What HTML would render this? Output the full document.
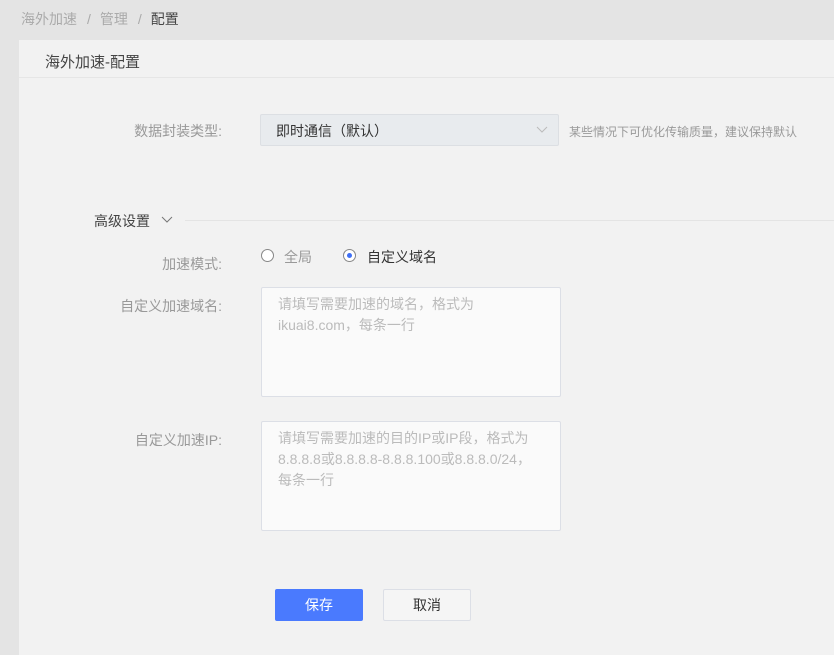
<!DOCTYPE html>
<html><head><meta charset="utf-8"><style>
*{margin:0;padding:0;box-sizing:border-box}
body{width:834px;height:655px;background:#e4e4e4;font-family:"Liberation Sans","Noto Sans CJK SC",sans-serif;font-size:14px;color:#333;position:relative;overflow:hidden}
.a{position:absolute;white-space:nowrap}
.card{position:absolute;left:19px;top:40px;right:0;bottom:0;background:#f2f2f2}
.lbl{color:#999;text-align:right;width:200px}
.ta{position:absolute;background:#fafafa;border:1px solid #dcdfe6;border-radius:2px;color:#bbb;padding:6px 16px;line-height:21px;white-space:normal}
</style></head><body>
<div class="a" style="left:21px;top:9px;color:#aaa">海外加速<span style="margin:0 9px 0 10px">/</span>管理<span style="margin:0 9px 0 10px">/</span><span style="color:#444">配置</span></div>
<div class="card"></div>
<div class="a" style="left:45px;top:51px;font-size:15px;color:#444">海外加速-配置</div>
<div class="a" style="left:19px;right:0;top:77px;height:1px;background:#e6e6e6"></div>
<div class="a lbl" style="left:22px;top:121px">数据封装类型:</div>
<div class="a" style="left:260px;top:114px;width:299px;height:32px;background:#e8ebee;border:1px solid #dcdfe3;border-radius:2px;padding:6px 15px;color:#333">即时通信（默认）
<svg style="position:absolute;right:10px;top:11px" width="12" height="8"><path d="M1 1L6 6L11 1" stroke="#bbb" fill="none"/></svg></div>
<div class="a" style="left:569px;top:123px;font-size:12px;color:#999">某些情况下可优化传输质量，建议保持默认</div>
<div class="a" style="left:94px;top:211px;color:#444">高级设置</div>
<svg class="a" style="left:161px;top:216px" width="12" height="8"><path d="M1 1L6 6L11 1" stroke="#777" fill="none"/></svg>
<div class="a" style="left:185px;right:0;top:220px;height:1px;background:#e4e4e4"></div>
<div class="a lbl" style="left:22px;top:254px">加速模式:</div>
<div class="a" style="left:261px;top:249px;width:13px;height:13px;border:1px solid #888;border-radius:50%;background:#fff"></div>
<div class="a" style="left:284px;top:247px;color:#999">全局</div>
<div class="a" style="left:343px;top:249px;width:13px;height:13px;border:1px solid #888;border-radius:50%;background:#fff"><div style="width:5px;height:5px;background:#3f6ff5;border-radius:50%;margin:3px"></div></div>
<div class="a" style="left:367px;top:247px;color:#333">自定义域名</div>
<div class="a lbl" style="left:22px;top:296px">自定义加速域名:</div>
<div class="ta" style="left:261px;top:287px;width:300px;height:110px">请填写需要加速的域名，格式为ikuai8.com，每条一行</div>
<div class="a lbl" style="left:22px;top:430px">自定义加速IP:</div>
<div class="ta" style="left:261px;top:421px;width:300px;height:110px">请填写需要加速的目的IP或IP段，格式为8.8.8.8或8.8.8.8-8.8.8.100或8.8.8.0/24，每条一行</div>
<div class="a" style="left:275px;top:589px;width:88px;height:32px;background:#4a7afe;border-radius:2px;color:#fff;text-align:center;line-height:32px">保存</div>
<div class="a" style="left:383px;top:589px;width:88px;height:32px;background:#f5f5f5;border:1px solid #dcdfe6;border-radius:2px;color:#333;text-align:center;line-height:30px">取消</div>
</body></html>
